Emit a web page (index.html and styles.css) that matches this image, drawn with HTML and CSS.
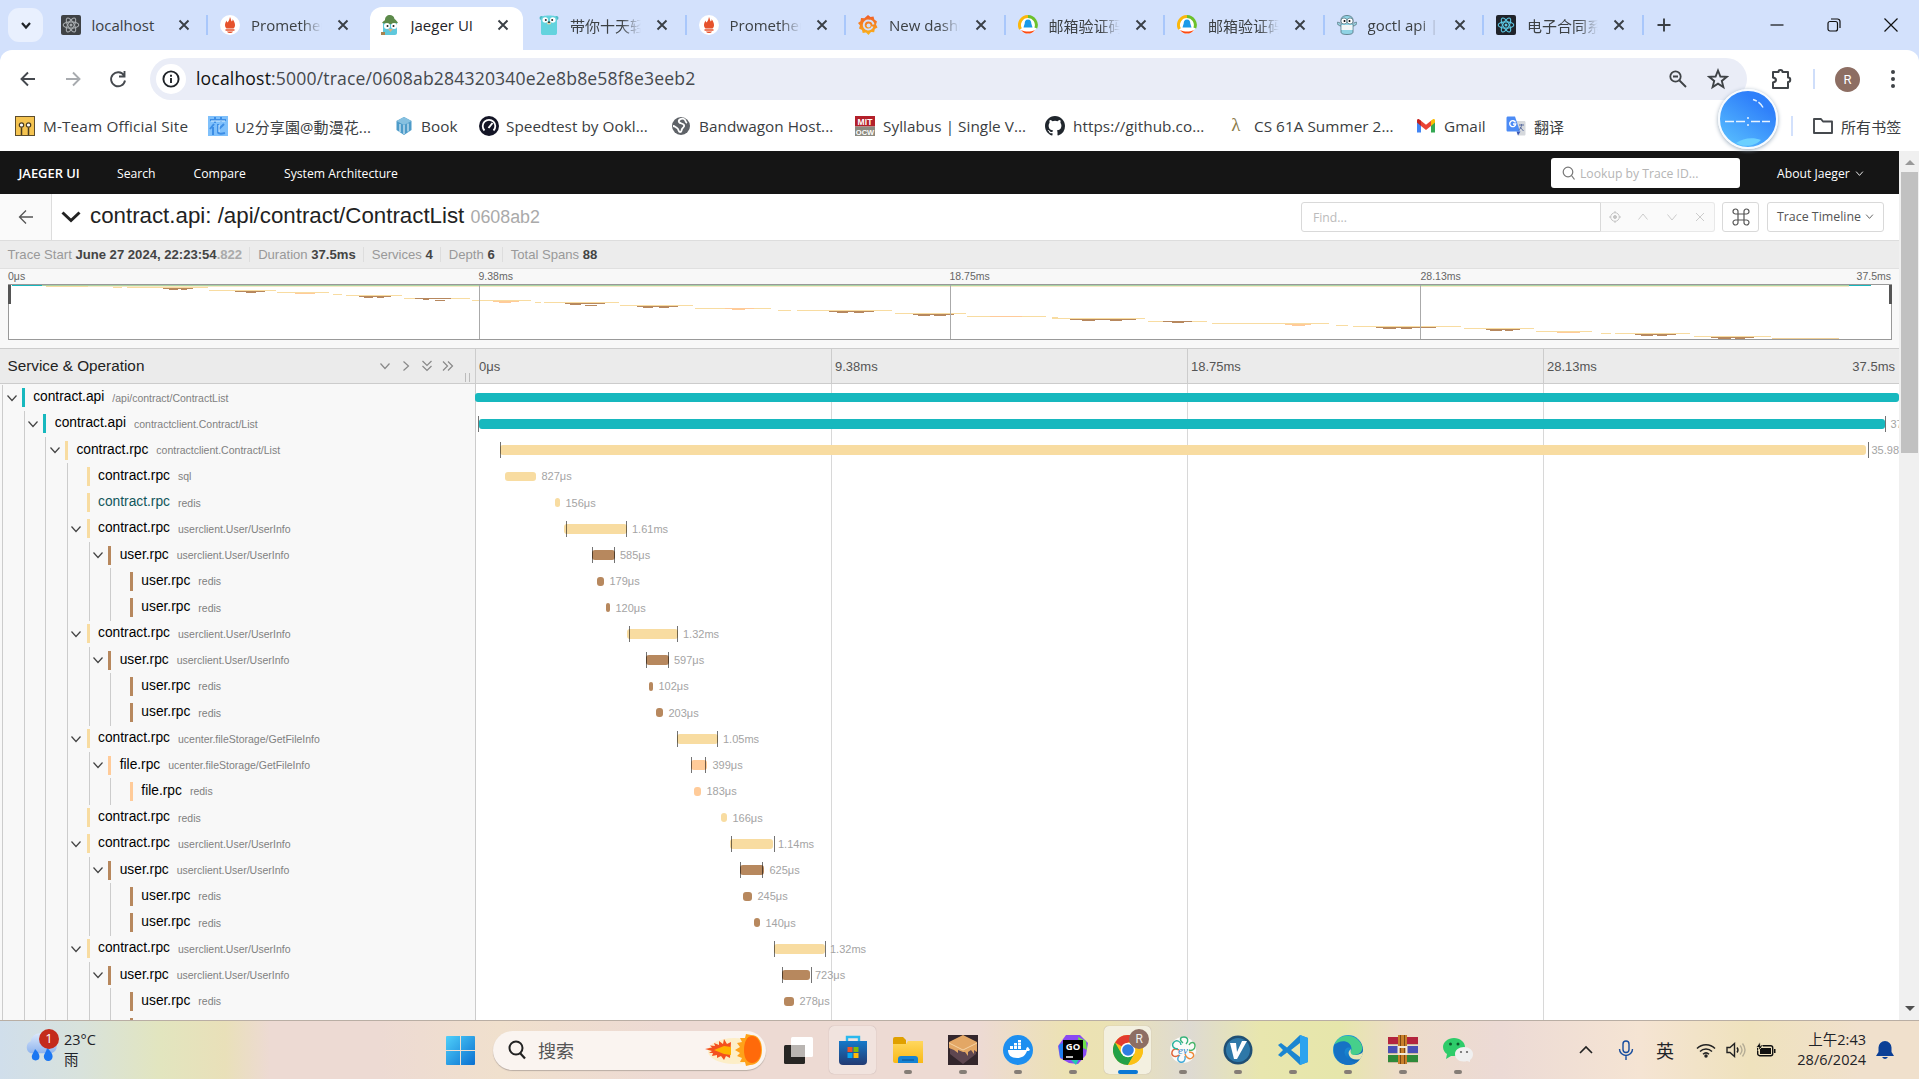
FILE: index.html
```html
<!DOCTYPE html>
<html lang="zh-CN">
<head>
<meta charset="utf-8">
<title>Jaeger UI</title>
<link rel="stylesheet" href="styles.css">
</head>
<body>
<svg class="defs" width="0" height="0">
  <defs>
    <linearGradient id="gWin" x1="0" y1="0" x2="1" y2="1"><stop offset="0" stop-color="#4fd0fa"/><stop offset="1" stop-color="#0a6fd0"/></linearGradient>
    <linearGradient id="gRain" x1="0" y1="0" x2="0" y2="1"><stop offset="0" stop-color="#dbe8fb"/><stop offset="1" stop-color="#8fb4ee"/></linearGradient>
    <linearGradient id="gEdge" x1="0" y1="0" x2="1" y2="1"><stop offset="0" stop-color="#2ab8e8"/><stop offset=".6" stop-color="#1479c9"/><stop offset="1" stop-color="#0c59a4"/></linearGradient>
    <linearGradient id="gStore" x1="0" y1="0" x2="0" y2="1"><stop offset="0" stop-color="#1579c9"/><stop offset="1" stop-color="#223a73"/></linearGradient>
    <linearGradient id="gFile" x1="0" y1="0" x2="0" y2="1"><stop offset="0" stop-color="#ffd75e"/><stop offset="1" stop-color="#f9b916"/></linearGradient>
    <linearGradient id="gGraf" x1="0" y1="0" x2="0" y2="1"><stop offset="0" stop-color="#f05a28"/><stop offset="1" stop-color="#fbb61a"/></linearGradient>
    <symbol id="x" viewBox="0 0 12 12"><path d="M1.500 1.500l9 9M10.500 1.500l-9 9" fill="none" stroke="#3a3f45" stroke-width="1.900"/></symbol>
    <symbol id="down" viewBox="0 0 12 12"><path d="M1.500 3.500L6 8.500l4.500-5" fill="none" stroke="currentColor" stroke-width="1.200"/></symbol>
    <symbol id="prom" viewBox="0 0 20 20"><circle cx="10" cy="10" r="10" fill="#fff"/><path d="M10 2c1 2 .7 3 1.800 4.500C13 5.500 12.600 4.500 12.500 4c1.500 2 2.500 4 2.500 6 0 1.500-.5 2.500-1.500 3.500h-7C5.500 12.500 5 11.500 5 10c0-2 1-3 1.500-4.500.3 1 .5 1.500 1 2C9 6 9.500 4 10 2zM5.500 14.300h9v1.500h-9zM7 16.500h6c-1 2-5 2-6 0z" fill="#e6522c"/></symbol>
    <symbol id="foxmail" viewBox="0 0 20 20"><circle cx="10" cy="10" r="9" fill="#fff"/><path d="M2.500 14A8.500 8.500 0 0 1 10 1.500" fill="none" stroke="#fbb70c" stroke-width="3"/><path d="M10 1.500A8.500 8.500 0 0 1 17.800 13" fill="none" stroke="#6cc12c" stroke-width="3"/><path d="M3 15a8.600 8.600 0 0 0 14 0c-5 2-9 2-14 0z" fill="#fb4a12"/><path d="M10 4.500c2.500 0 3.300 2 3.300 4l1.200 4H5.500l1.200-4c0-2 .8-4 3.300-4z" fill="#1c9be8"/></symbol>
    <symbol id="react" viewBox="0 0 20 20"><g fill="none" stroke="currentColor" stroke-width="1.100"><ellipse cx="10" cy="10" rx="7.800" ry="3.100"/><ellipse cx="10" cy="10" rx="7.800" ry="3.100" transform="rotate(60 10 10)"/><ellipse cx="10" cy="10" rx="7.800" ry="3.100" transform="rotate(120 10 10)"/></g><circle cx="10" cy="10" r="1.500" fill="currentColor"/></symbol>
    <symbol id="gopher" viewBox="0 0 20 20"><circle cx="2.500" cy="3" r="2" fill="#4bb9c4"/><circle cx="17.500" cy="3" r="2" fill="#4bb9c4"/><path d="M2 5C2 1 5 .5 10 .5S18 1 18 5v13c0 1.500-1 2-2 2H4c-1 0-2-.5-2-2z" fill="#63d3de"/><circle cx="6.200" cy="5" r="2.800" fill="#fff"/><circle cx="13.800" cy="5" r="2.800" fill="#fff"/><circle cx="6.800" cy="5" r="1" fill="#222"/><circle cx="13.200" cy="5" r="1" fill="#222"/><ellipse cx="10" cy="8.200" rx="2" ry="1.300" fill="#e8cfa0"/><circle cx="10" cy="7.200" r=".9" fill="#222"/></symbol>
  </defs>
</svg>

<header class="browser">
  <div class="tabstrip">
    <div class="tabsearch"><svg width="12" height="12"><path d="M2 4l4 4.500L10 4" fill="none" stroke="#1f2328" stroke-width="2.200"/></svg></div>
    <div class="tab"><svg class="fav dark" viewBox="0 0 20 20"><use href="#react"/></svg><span>localhost</span><svg class="cls"><use href="#x"/></svg></div>
    <div class="tab"><svg class="fav"><use href="#prom"/></svg><span>Prometheus</span><svg class="cls"><use href="#x"/></svg></div>
    <div class="tab active"><svg class="fav" viewBox="0 0 20 20"><path d="M3 9c0-3 3-4 7-4s7 1 7 4v9c0 1-1 2-2 2H5c-1 0-2-1-2-2z" fill="#5fc8dc"/><path d="M2 8c1-1.500 2-2 3-3 0-3 2-5 5-5 2 0 4 1 4.500 4C16 5 17 6 18 8c-5 1.500-11 1.500-16 0z" fill="#5c8a4a"/><circle cx="7" cy="11" r="3" fill="#fff"/><circle cx="14" cy="11" r="3" fill="#fff"/><circle cx="7.500" cy="11" r="1" fill="#222"/><circle cx="13.500" cy="11" r="1" fill="#222"/><path d="M8 14h5l-2.500 3z" fill="#d6b184"/><path d="M1 17h4v3H1z" fill="#a8834f"/></svg><span>Jaeger UI</span><svg class="cls"><use href="#x"/></svg></div>
    <div class="tab"><svg class="fav"><use href="#gopher"/></svg><span>带你十天轻松</span><svg class="cls"><use href="#x"/></svg></div>
    <div class="tab"><svg class="fav"><use href="#prom"/></svg><span>Prometheus</span><svg class="cls"><use href="#x"/></svg></div>
    <div class="tab"><svg class="fav" viewBox="0 0 20 20"><path d="M10 0l2.500 2 3-.5.8 3L19 6.500 18 9.500l1.500 3-2.700 1.500-.6 3.200-3.200-.2L10.500 20 8 17.500l-3.300.5-.7-3L1 13.500l1-3-2-2.500 2.500-1.700L3 3l3.300.3z" fill="url(#gGraf)"/><path d="M14.500 11.500a4.500 4.500 0 1 1-4-6c2.500 0 4.500 1.500 5 4" fill="none" stroke="#d3e1fc" stroke-width="2"/><circle cx="10.600" cy="10.500" r="2" fill="#d3e1fc"/></svg><span>New dashboard</span><svg class="cls"><use href="#x"/></svg></div>
    <div class="tab"><svg class="fav"><use href="#foxmail"/></svg><span>邮箱验证码是</span><svg class="cls"><use href="#x"/></svg></div>
    <div class="tab"><svg class="fav"><use href="#foxmail"/></svg><span>邮箱验证码是</span><svg class="cls"><use href="#x"/></svg></div>
    <div class="tab"><svg class="fav" viewBox="0 0 20 20"><path d="M3 8c-2-1-3-1-3 0s2 3 4 3M17 8c2-1 3-1 3 0s-2 3-4 3" fill="#9bd5e3" stroke="#53707a" stroke-width=".8"/><path d="M4 5c0-3 3-4.500 6-4.500S16 2 16 5v12c0 2-3 2.500-6 2.500S4 19 4 17z" fill="#8fd3e4" stroke="#53707a" stroke-width=".8"/><path d="M4.500 10h11v5h-11z" fill="#f3f6f6"/><circle cx="7" cy="6" r="3" fill="#fff" stroke="#53707a" stroke-width=".7"/><circle cx="13" cy="6" r="3" fill="#fff" stroke="#53707a" stroke-width=".7"/><circle cx="7.500" cy="6" r="1"/><circle cx="12.500" cy="6" r="1"/></svg><span>goctl api | go</span><svg class="cls"><use href="#x"/></svg></div>
    <div class="tab"><svg class="fav dark cyan" viewBox="0 0 20 20"><use href="#react"/></svg><span>电子合同系统</span><svg class="cls"><use href="#x"/></svg></div>
    <svg class="plus" width="14" height="14"><path d="M7 .5v13M.5 7h13" stroke="#3a3f45" stroke-width="1.900"/></svg>
    <div class="winctl">
      <svg width="14" height="14"><path d="M.5 7h13" stroke="#111" stroke-width="1.200"/></svg>
      <svg width="14" height="14" fill="none" stroke="#111" stroke-width="1.200"><rect x="1" y="3.500" width="9.500" height="9.500" rx="2"/><path d="M4 1h6.500a2.500 2.500 0 0 1 2.500 2.500V10"/></svg>
      <svg width="14" height="14"><path d="M.5.5l13 13M13.500.5l-13 13" stroke="#111" stroke-width="1.200"/></svg>
    </div>
  </div>
  <div class="toolbar">
    <svg class="tb" width="20" height="20"><path d="M17 10H4M10 3.500L3.500 10l6.500 6.500" fill="none" stroke="#45494e" stroke-width="1.900"/></svg>
    <svg class="tb" width="20" height="20"><path d="M3 10h13M10 3.500l6.500 6.500-6.500 6.500" fill="none" stroke="#a8abaf" stroke-width="1.900"/></svg>
    <svg class="tb" width="20" height="20"><path d="M16 6.500A7 7 0 1 0 17 11.500M16.500 2v5.500H11" fill="none" stroke="#45494e" stroke-width="1.900"/></svg>
    <div class="omnibox">
      <i class="info"><svg width="20" height="20"><circle cx="10" cy="10" r="7.600" fill="none" stroke="#1f2328" stroke-width="1.900"/><path d="M10 9v5M10 5.700v2" stroke="#1f2328" stroke-width="1.900"/></svg></i>
      <span class="url"><b>localhost</b>:5000/trace/0608ab284320340e2e8b8e58f8e3eeb2</span>
      <svg class="mag" width="20" height="20"><circle cx="7.500" cy="7.500" r="5.200" fill="none" stroke="#3f4347" stroke-width="1.800"/><path d="M11.500 11.500l6.500 6.500M5 7.500h5" stroke="#3f4347" stroke-width="1.900"/></svg>
      <svg class="star" width="22" height="22"><path d="M11 2.500l2.400 6 6.200.4-4.800 4 1.600 6.200L11 15.700l-5.400 3.400 1.600-6.200-4.800-4 6.200-.4z" fill="none" stroke="#3f4347" stroke-width="1.900"/></svg>
    </div>
    <svg class="ext" width="22" height="24"><path d="M2 5h5.500a2 2 0 0 1 4 0H17v5.500a2 2 0 0 1 0 4.500v6H2v-5.500c4-1 4-4 0-5z" fill="none" stroke="#3f4347" stroke-width="2" stroke-linejoin="round"/></svg>
    <i class="vsep"></i>
    <div class="avatar">R</div>
    <svg class="dots" width="6" height="20" fill="#3f4347"><circle cx="3" cy="3" r="2"/><circle cx="3" cy="10" r="2"/><circle cx="3" cy="17" r="2"/></svg>
  </div>
  <div class="bookmarks">
    <div class="bm"><svg viewBox="0 0 20 20"><rect x=".5" y=".5" width="19" height="19" fill="#f5c451" stroke="#5d4d2c"/><g fill="#fff" stroke="#4a3c22" stroke-width="1.200"><circle cx="6.500" cy="9" r="2.200"/><circle cx="13.500" cy="9" r="2.200"/></g><path d="M6.500 11.500V19M13.500 11.500V19" stroke="#4a3c22" stroke-width="1.500"/></svg><span>M-Team Official Site</span></div>
    <div class="bm cjk"><svg viewBox="0 0 20 20"><rect width="20" height="20" fill="#7fc0fb"/><path d="M2 4h16M7 1v6M13 1v5M6 8l-4 5M5 11v8M10 8v8c0 2 3 2 7 1M16 8l-5 5" fill="none" stroke="#3d8ee6" stroke-width="2"/><path d="M3 5h14M11 9v7" stroke="#d9f0ff"/></svg><span>U2分享園@動漫花...</span></div>
    <div class="bm"><svg viewBox="0 0 20 20"><path d="M10 1l7.500 4v9L10 19l-7.500-5V5z" fill="#4d9bc9"/><path d="M10 1l7.500 4L10 9 2.500 5z" fill="#86c0e0"/><path d="M6 8v8M10 9v9M14 7.500v8" stroke="#d5eaf5" stroke-width="1.200"/></svg><span>Book</span></div>
    <div class="bm"><svg viewBox="0 0 20 20"><circle cx="10" cy="10" r="10" fill="#141526"/><path d="M5.500 14.500a6.300 6.300 0 1 1 9 0" fill="none" stroke="#fff" stroke-width="1.800"/><path d="M9.500 12l4-5" stroke="#fff" stroke-width="2"/></svg><span>Speedtest by Ookl...</span></div>
    <div class="bm"><svg viewBox="0 0 20 20"><circle cx="10" cy="10" r="9" fill="#5f6368"/><path d="M13 3c-3-1-6 1-5 3s4 1 5 3-1 2-2 4 0 3-2 3-1-3-3-4-2-2-4-2M13 3c2 1 1 3 3 4" fill="none" stroke="#fff" stroke-width="1.800"/></svg><span>Bandwagon Host...</span></div>
    <div class="bm"><svg viewBox="0 0 20 20"><rect width="20" height="10.500" fill="#b3202a"/><rect y="10.500" width="20" height="9.500" fill="#8c8a80"/><text x="10" y="8.800" class="mit">MIT</text><text x="10" y="18.800" class="mit ocw">OCW</text></svg><span>Syllabus | Single V...</span></div>
    <div class="bm"><svg viewBox="0 0 16 16"><path fill="#20262d" d="M8 0C3.580 0 0 3.580 0 8c0 3.540 2.290 6.530 5.470 7.590.4.070.55-.17.55-.38 0-.19-.010-.82-.010-1.490-2.010.37-2.530-.49-2.690-.94-.090-.23-.48-.94-.82-1.130-.28-.15-.68-.52-.010-.53.63-.010 1.080.58 1.230.82.72 1.210 1.870.87 2.330.66.070-.52.28-.87.51-1.070-1.780-.2-3.640-.89-3.640-3.950 0-.87.31-1.590.82-2.150-.080-.2-.36-1.020.080-2.120 0 0 .67-.21 2.200.82a7.600 7.600 0 0 1 4 0c1.530-1.040 2.200-.82 2.200-.82.44 1.100.16 1.920.080 2.120.51.56.82 1.270.82 2.150 0 3.070-1.870 3.750-3.650 3.950.29.25.54.73.54 1.480 0 1.070-.010 1.930-.010 2.200 0 .21.15.46.55.38A8 8 0 0 0 16 8c0-4.420-3.580-8-8-8z"/></svg><span>https://github.co...</span></div>
    <div class="bm"><i class="lambda">λ</i><span>CS 61A Summer 2...</span></div>
    <div class="bm"><svg viewBox="0 0 20 20"><path d="M1 4.500V16.500h4V8z" fill="#4285f4"/><path d="M19 4.500V16.500h-4V8z" fill="#34a853"/><path d="M15 4.500l2-1.300c1-.5 2 0 2 1.300v2L15 10z" fill="#fbbc04"/><path d="M5 10V4.800l5 3.900 5-3.900V10l-5 4z" fill="#ea4335"/><path d="M1 4.500c0-1.300 1-1.800 2-1.300l2 1.300V10L1 6.500z" fill="#c5221f"/></svg><span>Gmail</span></div>
    <div class="bm cjk"><svg viewBox="0 0 20 20"><path d="M8 5h10c1 0 1.500.5 1.500 1.500V18c0 1-.5 1.500-1.500 1.500h-6z" fill="#d5d8dc"/><path d="M12 19.500l-1.500-4h4z" fill="#3956b5"/><path d="M2 .5h7L14 15.500H2C1 15.500.5 15 .5 14V2C.5 1 1 .5 2 .5z" fill="#4c8bf5"/><path d="M9.500 6.500A3 3 0 1 0 9.700 8H7" fill="none" stroke="#fff" stroke-width="1.400"/><path d="M13 9h5M15.500 8v1c0 2-1 4-3 5M14 11l3.500 4" stroke="#5d6fa0" fill="none"/></svg><span>翻译</span></div>
    <div class="bm cjk all"><svg viewBox="0 0 20 20"><path d="M1 3h7l2 2.500h9V17H1z" fill="none" stroke="#45494e" stroke-width="1.900" stroke-linejoin="round"/></svg><span>所有书签</span></div>
  </div>
  <div class="orb"><svg width="56" height="56"><path d="M33 8.500c5 1.500 8 4.500 10 8" fill="none" stroke="#dff0ff" stroke-width="1.500" stroke-dasharray="4 2 12"/><path d="M16 52c7-5 17-6 25-3-6 6-17 8-25 3z" fill="#6bd0ff"/><path d="M5 30.500h9M16 30.500h9M31 30.500h9M42 30.500h8" stroke="#e8f4ff" stroke-width="1.300"/><circle cx="28" cy="27" r="1" fill="#e8f4ff"/><circle cx="28" cy="34" r="1" fill="#e8f4ff"/></svg></div>
</header>

<main class="viewport">
  <div class="page">
    <nav class="topnav">
      <b>JAEGER UI</b><a>Search</a><a>Compare</a><a>System Architecture</a>
      <div class="lookup"><svg width="13" height="14"><circle cx="6" cy="6" r="4.800" fill="none" stroke="#777" stroke-width="1.200"/><path d="M9.500 9.500l3 4" stroke="#777" stroke-width="1.200"/></svg>Lookup by Trace ID...</div>
      <div class="about">About Jaeger<svg width="9" height="9"><use href="#down"/></svg></div>
    </nav>
    <section class="titlebar">
      <div class="back"><svg width="16" height="16"><path d="M15 8H2M8 1.500L1.500 8 8 14.500" fill="none" stroke="#555" stroke-width="1.300"/></svg></div>
      <svg class="big" width="20" height="14"><path d="M1.500 2.500L10 10.500l8.500-8" fill="none" stroke="#222" stroke-width="3"/></svg>
      <h1>contract.api: /api/contract/ContractList <small>0608ab2</small></h1>
      <div class="find">
        <div class="field">Find...</div>
        <div class="findbtns">
          <svg width="12" height="12" fill="none" stroke="#c4c4c4"><circle cx="6" cy="6" r="4.300"/><circle cx="6" cy="6" r="1.500" fill="#c4c4c4"/><path d="M6 0v2M6 10v2M0 6h2M10 6h2"/></svg>
          <svg width="12" height="12"><path d="M1.500 8.500L6 3l4.500 5.500" fill="none" stroke="#ccc"/></svg>
          <svg width="12" height="12"><path d="M1.500 3.500L6 9l4.500-5.500" fill="none" stroke="#ccc"/></svg>
          <svg width="12" height="12"><path d="M2 2l8 8M10 2l-8 8" fill="none" stroke="#ccc"/></svg>
        </div>
      </div>
      <div class="btn cmd"><svg width="18" height="18" fill="none" stroke="#555" stroke-width="1.200"><path d="M6 6h6v6H6zM6 6H3.800A2.500 2.500 0 1 1 6 3.800zM12 6V3.800A2.500 2.500 0 1 1 14.200 6zM12 12h2.200A2.500 2.500 0 1 1 12 14.200zM6 12v2.200A2.500 2.500 0 1 1 3.800 12z"/></svg></div>
      <div class="btn mode">Trace Timeline<svg width="9" height="9"><use href="#down"/></svg></div>
    </section>
    <section class="meta">
      <span>Trace Start <b>June 27 2024, 22:23:54<em>.822</em></b></span><span>Duration <b>37.5ms</b></span><span>Services <b>4</b></span><span>Depth <b>6</b></span><span>Total Spans <b>88</b></span>
    </section>
    <section class="overview">
      <div class="ticks"><span>0μs</span><span>9.38ms</span><span>18.75ms</span><span>28.13ms</span><span class="end">37.5ms</span></div>
      <div class="graph" id="graph"><i class="q q1"></i><i class="q q2"></i><i class="q q3"></i><i class="grip left"></i><i class="grip right"></i></div>
    </section>
    <section class="thead">
      <div class="so"><h2>Service &amp; Operation</h2>
        <svg width="12" height="12"><use href="#down"/></svg>
        <svg width="12" height="12"><path d="M3.500 1.500L8.500 6l-5 4.500" fill="none" stroke="currentColor" stroke-width="1.200"/></svg>
        <svg width="12" height="12"><path d="M1.500 1L6 5.500 10.500 1M1.500 6L6 10.500 10.500 6" fill="none" stroke="currentColor" stroke-width="1.200"/></svg>
        <svg width="12" height="12"><path d="M1 1.500L5.500 6 1 10.500M6 1.500L10.500 6 6 10.500" fill="none" stroke="currentColor" stroke-width="1.200"/></svg>
        <i class="resizer"></i>
      </div>
      <div class="cols"><span>0μs</span><span>9.38ms</span><span>18.75ms</span><span>28.13ms<b>37.5ms</b></span></div>
    </section>
    <section class="rows" id="rows"></section>
  </div>
  <aside class="scroll"><i class="up"></i><i class="thumb"></i><i class="dn"></i></aside>
</main>

<footer class="taskbar">
  <div class="weather">
    <svg width="34" height="38" viewBox="0 3 31 34"><path d="M7 23a6 6 0 0 1 0-11 9 9 0 0 1 17-2c7-1 10 10 2 13z" fill="url(#gRain)"/><path d="M11 19c3 3 4 5 4 7a3.500 3.500 0 0 1-7 0c0-2 2-4 3-7zM22 18c4 4 5 6 5 8a4 4 0 0 1-8 0c0-2 2-4 3-8z" fill="#1b77f2"/></svg>
    <i class="count">1</i>
    <p>23°C<br>雨</p>
  </div>
  <svg class="start" width="29" height="29" fill="url(#gWin)"><path d="M0 1q0-1 1-1h13v14H0zM15 0h13q1 0 1 1v13H15zM0 15h14v14H1q-1 0-1-1zM15 15h14v13q0 1-1 1H15z"/></svg>
  <div class="search">
    <svg width="20" height="20"><circle cx="9" cy="8" r="6.500" fill="none" stroke="#222" stroke-width="2"/><path d="M13 13l5 5.500" stroke="#222" stroke-width="2.200"/></svg>
    <span>搜索</span>
    <svg class="fire" width="60" height="34"><ellipse cx="30" cy="18" rx="26" ry="13" fill="#ffe9ac" opacity=".6"/><path d="M1 16l7-1.500-2-2 5 .5-1-3 5 2 0-4 4 3 1-5 3 5 4-2-1 16-4-2-2 4-3-4-4 2 0-3-5 1 1-3-4 0 3-2z" fill="#f4511e"/><path d="M10 17l10-4 7 1v8l-7-1z" fill="#ffb300"/><path d="M58 17c0 9-5 15-12 15l-4 1-1-4-5 0 2-4-5-2 3-3-5-3 5-3-3-4 5-1-2-4 5 0 1-4 5 1c7 0 11 6 11 15z" fill="#ffa21a"/><path d="M57 17c0 8-4 13-9 13s-8-5-8-13S43 3 48 3s9 6 9 14z" fill="#ff6a0a"/></svg>
  </div>
  <div class="apps">
    <div class="app view"><svg viewBox="0 0 30 30"><rect x="1" y="10" width="21" height="19" rx="1.500" fill="#272624"/><rect x="8" y="2" width="22" height="20" rx="1.500" fill="#fff"/><path d="M8 10h14v12H8z" fill="#b9b5b2"/></svg></div>
    <div class="app hover"><svg viewBox="0 0 30 30"><path d="M9 7V2h12v5" fill="none" stroke="#2ab8ee" stroke-width="2.400"/><path d="M1 6h28v20q0 4-4 4H5q-4 0-4-4z" fill="url(#gStore)"/><path d="M9.500 12h5v5h-5z" fill="#f35325"/><path d="M15.500 12h5v5h-5z" fill="#81bc06"/><path d="M9.500 18h5v5h-5z" fill="#05a6f0"/><path d="M15.500 18h5v5h-5z" fill="#ffba08"/></svg></div>
    <div class="app run"><svg viewBox="0 0 30 30"><path d="M0 4q0-2 2-2h8l3 3v5H0z" fill="#e0a000"/><path d="M0 9h13l2-3h15v22H2q-2 0-2-2z" fill="url(#gFile)"/><path d="M5 28v-4q0-3 3-3h14q3 0 3 3v4z" fill="#1583d4"/><path d="M9 25h12" stroke="#0b4f8c"/></svg></div>
    <div class="app run"><svg viewBox="0 0 30 30"><path d="M0 0h30v30H0z" fill="#33262c"/><path d="M2 8L15 15l13-7v11L15 29 2 19z" fill="#5e4650"/><path d="M1 7L15 0l14 7v10l-3-2v4l-3-4-3 2v4l-3-4-2 0-5-2v3l-4-3-5-2z" fill="#e3a765"/><path d="M1 8l14 7 14-7" fill="none" stroke="#f5d3a5"/></svg></div>
    <div class="app run"><svg viewBox="0 0 30 30"><circle cx="15" cy="15" r="15" fill="#1d8ff0"/><path d="M5 15h18c0-2 1-3 2-3l2 3c-1 1-2 1-3 1-2 5-5 7-10 7-6 0-9-3-9-8zM7 11h3v3H7zM11 11h3v3h-3zM15 11h3v3h-3zM11 8h3v2.500h-3zM15 8h3v2.500h-3zM15 5h3v2.500h-3z" fill="#fff"/></svg></div>
    <div class="app run"><svg viewBox="0 0 30 30"><path d="M8 0h14l8 8-2 12-8 9-9-1-9-5L0 11z" fill="#8a4af3"/><path d="M20 2l8 4 1 9-8-4z" fill="#6ee04a"/><path d="M1 10l6-3 1 18-6-3z" fill="#1e7ff0"/><path d="M10 22h12l-4 8z" fill="#24c8b0"/><path d="M5 5h20v20H5z" fill="#000"/><path d="M8 22h7" stroke="#fff" stroke-width="1.500"/><text x="15" y="15" class="go">GO</text></svg></div>
    <div class="app run chrome"><svg viewBox="0 0 30 30"><circle cx="15" cy="15" r="15" fill="#fbc116"/><path d="M15 15L2 7.500A15 15 0 0 1 28 7.500H15z" fill="#e33b2e"/><path d="M15 15L8.500 18.800 2 7.500A15 15 0 0 0 15 30l6.500-11.200z" fill="#23a047"/><path d="M15 7.500h13A15 15 0 0 1 15 30l6.500-11.200z" fill="#fbc116"/><circle cx="15" cy="15" r="7.300" fill="#fff"/><circle cx="15" cy="15" r="5.800" fill="#2f7de1"/></svg><i class="rb">R</i></div>
    <div class="app run"><svg viewBox="0 0 30 30"><circle cx="15" cy="15" r="13" fill="#fff" opacity=".85"/><g fill="none" stroke-width="1.400"><path d="M15 8c-4-3-3-6 1-6s5 4 2 7" stroke="#36b27b"/><path d="M21 10c2-4 6-3 6 1s-4 5-6 4" stroke="#48b56b"/><path d="M21 17c5 0 6 4 3 6s-6-1-7-4" stroke="#ed8a3a"/><path d="M17 21c1 5-2 7-5 6s-3-5 0-7" stroke="#3fa9d8"/><path d="M11 20c-4 3-8 1-7-3s5-3 7-2" stroke="#e0663b"/><path d="M10 14C5 14 3 10 6 7s7 0 7 3" stroke="#2bb3a0"/></g><text x="15" y="19" class="ev">ev</text></svg></div>
    <div class="app run"><svg viewBox="0 0 30 30"><circle cx="15" cy="15" r="14.500" fill="#1f4f74"/><circle cx="15" cy="15" r="12" fill="#2e78a8"/><path d="M7 8h6l1 9 5-11h5L14 24h-3z" fill="#fff"/></svg></div>
    <div class="app run"><svg viewBox="0 0 30 30"><path d="M22 0l8 3v24l-8 3L9 17.500 3 22l-3-2 5-5-5-5 3-2 6 4.500zM22 8l-9 7 9 7z" fill="#1b86d1" fill-rule="evenodd"/><path d="M22 0l8 3v24l-8 3z" fill="#2ba3ee"/></svg></div>
    <div class="app run"><svg viewBox="0 0 30 30"><circle cx="15" cy="15" r="15" fill="url(#gEdge)"/><path d="M2 9C6-1 20-2 27 7c5 7 1 13-6 13-4 0-5-2-3-4 2-5-2-8-6-8-4 0-7 1-10 1z" fill="#46cf8b"/><path d="M1 10C7 4 18 5 18 13c-7-3-10 8 0 13 4 1 7 0 9-2-3 5-8 6-12 6C5 30-1 20 1 10z" fill="#1672c4"/><path d="M18 14c-1 4 0 6 4 6s8-2 8-4c0 3-1 6-3 8-9 3-15-6-9-10z" fill="#e8e6b4"/></svg></div>
    <div class="app run"><svg viewBox="0 0 30 30"><path d="M0 2h30v8H0z" fill="#b3243e"/><path d="M0 11h30v8H0z" fill="#4a4fb5"/><path d="M0 20h30v8H0z" fill="#2f8a3a"/><path d="M0 9.500h30M0 18.500h30M0 27.500h30" stroke="#c9b9a0"/><path d="M10 0h9v29h-9z" fill="#c9802b"/><path d="M12 0h1v29h-1zM16 0h1v29h-1z" fill="#7a4815"/><path d="M10.500 12h8v7h-8z" fill="none" stroke="#f1ead9" stroke-width="2"/></svg></div>
    <div class="app run"><svg viewBox="0 0 30 30"><path d="M11 3c6 0 11 4 11 9s-5 9-11 9l-3 0-5 3 1-5c-2-1-4-4-4-7 0-5 5-9 11-9z" fill="#2ecc6a"/><circle cx="7.500" cy="9" r="1.500" fill="#0b5a2c"/><circle cx="15" cy="9" r="1.500" fill="#0b5a2c"/><path d="M21 12c5 0 9 3 9 7 0 3-1 4-3 6l0 2-3-1c-7 2-12-2-12-7 0-4 4-7 9-7z" fill="#f0f0f0"/><circle cx="18" cy="17" r="1.100" fill="#666"/><circle cx="24" cy="17" r="1.100" fill="#666"/></svg></div>
  </div>
  <div class="tray">
    <svg width="14" height="10"><path d="M1 8l6-6 6 6" fill="none" stroke="#222" stroke-width="1.600"/></svg>
    <svg class="mic" width="16" height="20" fill="none" stroke="#164c9e" stroke-width="1.400"><rect x="5" y="1" width="6" height="11.500" rx="3"/><path d="M1.500 9a6.500 6.500 0 0 0 13 0M8 15.500V20"/></svg>
    <span class="ime">英</span>
    <svg class="wifi" width="20" height="16" fill="none" stroke="#222" stroke-width="1.500"><path d="M1 6.500a12.500 12.500 0 0 1 18 0M4 9.500a8.500 8.500 0 0 1 12 0M7 12.200a4.500 4.500 0 0 1 6 0"/><circle cx="10" cy="14" r="1" fill="#222"/></svg>
    <svg class="vol" width="20" height="16" fill="none" stroke="#222" stroke-width="1.400"><path d="M1 5.500h3L8.500 1.500v13L4 10.500H1z"/><path d="M11 5.500q2 2.500 0 5"/><path d="M14 3.500q4 4.500 0 9M16.500 1.500q5 6.500 0 13" stroke="#b5ad96"/></svg>
    <svg class="bat" width="20" height="16"><rect x="1.700" y="3.700" width="15" height="10" rx="2" fill="none" stroke="#111" stroke-width="1.400"/><path d="M4 6h11v6H4z" fill="#111"/><path d="M18 7h1.500v4H18z" fill="#111"/><path d="M4 0L0 5.500h3L2 9l5-5H4.500z" fill="#111" stroke="#efe3be" stroke-width=".8"/></svg>
    <p class="clock">上午2:43<br>28/6/2024</p>
    <svg class="bell" width="18" height="20"><path d="M9 1a6.500 6.500 0 0 1 6.500 6.500V12L18 16H0l2.500-4V7.500A6.500 6.500 0 0 1 9 1zM6 17h6q-3 4-6 0z" fill="#0b3f96"/></svg>
  </div>
</footer>
<script src="script.js"></script>
</body>
</html>
```
FILE: styles.css
```css
* { box-sizing: border-box; }
body { margin: 0; width: 1919px; height: 1079px; overflow: hidden; display: flex; flex-direction: column; background: #fff; font-family: "Open Sans", "Noto Sans CJK SC", sans-serif; color: #1f2328; }
h1, h2, p { margin: 0; font-weight: 400; }
i, em { font-style: normal; }
svg { display: block; flex: none; }
.defs { position: absolute; }

/* browser frame */
.browser { position: relative; height: 151px; flex: none; background: #d3e1fc; }
.tabstrip { height: 50px; display: flex; align-items: center; padding-left: 8px; }
.tabsearch { width: 35px; height: 34px; border-radius: 11px; background: #e9f0fe; display: grid; place-items: center; margin-right: 4.500px; }
.tab { position: relative; width: 159.500px; height: 50px; display: flex; align-items: center; padding-left: 13px; font-size: 15px; color: #3c4043; }
.tab::after { content: ""; position: absolute; right: -1px; top: 15px; width: 2px; height: 20px; background: #a9c7fb; }
.tab:nth-child(3)::after, .tab.active::after { display: none; }
.tab span { width: 71px; margin: 0 15px 0 11px; overflow: hidden; white-space: nowrap; -webkit-mask-image: linear-gradient(90deg, #000 72%, transparent 100%); }
.tab:nth-child(2) span, .tab.active span { -webkit-mask-image: none; }
.tab.active { color: #1f2328; z-index: 1; }
.tab.active::before { content: ""; position: absolute; z-index: -1; left: 3px; top: 7px; width: 153px; height: 43px; border-radius: 12px 12px 0 0; background: #fff; }
.fav { width: 20px; height: 20px; }
.dark { background: #3f4245; color: #a9adb0; border-radius: 2px; }
.dark.cyan { background: #20232a; color: #5cc8e4; }
.cls { width: 12px; height: 12px; }
.plus { margin-left: 14px; }
.winctl { display: flex; gap: 43px; margin-left: auto; padding-right: 21px; }
.toolbar { height: 58px; background: #fff; border-radius: 12px 12px 0 0; display: flex; align-items: center; padding: 0 0 0 18px; }
.tb { margin-right: 25px; }
.omnibox { width: 1597px; height: 42px; margin-left: -3px; border-radius: 21px; background: #eaedf7; display: flex; align-items: center; padding-left: 6px; }
.info { width: 30px; height: 30px; border-radius: 50%; background: #fff; display: grid; place-items: center; }
.url { margin: -2px 0 0 10px; font-size: 17.600px; color: #45494e; letter-spacing: .15px; }
.url b { font-weight: 400; color: #111; }
.mag { margin-left: auto; }
.star { margin: 0 18px 0 19px; }
.ext { margin-left: 24px; }
.vsep { width: 2px; height: 20px; background: #cfdefa; margin-left: 20px; }
.avatar { width: 25px; height: 25px; margin-left: 20px; border-radius: 50%; background: #8d6e63; color: #fff; display: grid; place-items: center; font: 13px Roboto, sans-serif; }
.dots { margin-left: 30px; }
.bookmarks { height: 43px; background: #fff; padding: 0 0 7px 15px; display: grid; grid-template-columns: 193px 186px 85px 192px 184px 190px 181px 190px 90px 285px auto; align-items: center; }
.bm { display: flex; align-items: center; gap: 8px; font-size: 15.300px; white-space: nowrap; color: #3a3d41; letter-spacing: .04px; }
.bm.cjk { font-size: 15px; letter-spacing: .1px; }
.bm:first-child { letter-spacing: .15px; }
.bm svg, .lambda { width: 20px; height: 20px; }
.bm.cjk:nth-child(2) { gap: 7px; }
.bm:nth-child(3) span, .bm:nth-child(4) span { margin-left: -1px; }
.lambda { font: 19px/18px "Liberation Serif", serif; text-align: center; color: #8a7a4a; }
.mit { font: 900 8.500px "Liberation Sans", sans-serif; text-anchor: middle; fill: #fff; }
.ocw { font-size: 7.500px; }
.bm.all { border-left: 2px solid #d3e1fc; height: 20px; padding-left: 20px; }
.orb { position: absolute; z-index: 3; left: 1718px; top: 89px; width: 60px; height: 60px; border: 2px solid #f7fbff; border-radius: 50%; background: linear-gradient(35deg, #5cc4ff, #2f80fa 75%); box-shadow: 0 1px 4px #9ab; overflow: hidden; }

/* page */
.viewport { height: 869px; flex: none; display: flex; font-family: "Liberation Sans", Arial, sans-serif; }
.page { width: 1899px; display: flex; flex-direction: column; overflow: hidden; }
.topnav { height: 43px; flex: none; background: #151515; color: #fff; display: flex; align-items: center; padding: 1px 0 0 18.500px; font: 12.200px "Open Sans", sans-serif; }
.topnav b { font-weight: 600; font-size: 12.900px; width: 98.500px; }
.topnav a { margin-right: 38px; }
.lookup { width: 189px; height: 30px; margin-left: auto; border-radius: 3px; background: #fff; color: #b5b5b5; display: flex; align-items: center; gap: 5px; padding-left: 11px; }
.about { width: 159px; padding-left: 37px; display: flex; align-items: center; gap: 5px; }
.titlebar { height: 47px; flex: none; border-bottom: 1px solid #ddd; display: flex; align-items: center; }
.back { width: 52px; height: 46px; border-right: 1px solid #ddd; background: #fafafa; display: grid; place-items: center; }
.big { margin: 0 0 0 9px; }
h1 { margin: -3px 0 0 9px; font-size: 22.300px; color: #222; white-space: nowrap; }
h1 small { font-size: 17.850px; color: #aaa; }
.find { width: 414px; height: 30px; margin: -1px 7px 0 auto; display: flex; font: 12.200px "Open Sans", sans-serif; }
.field { width: 300px; border: 1px solid #d9d9d9; border-radius: 3px 0 0 3px; color: #bbb; padding: 6px 11px; }
.findbtns { flex: 1; border: 1px solid #e8e8e8; border-left: 0; border-radius: 0 3px 3px 0; background: #fafafa; display: flex; align-items: center; justify-content: space-around; }
.btn { height: 30px; margin-top: -1px; border: 1px solid #d9d9d9; border-radius: 3px; display: flex; align-items: center; justify-content: center; }
.cmd { width: 37px; }
.mode { width: 117px; margin: -1px 15px 0 8px; gap: 4px; font: 12.400px "Open Sans", sans-serif; color: #555; white-space: nowrap; }
.meta { height: 28px; flex: none; background: #ececec; border-bottom: 1px solid #e0e0e0; display: flex; align-items: center; padding-left: 7.500px; font-size: 13.100px; color: #999; }
.meta span { padding-right: 7px; margin-right: 8px; border-right: 1px solid #ddd; line-height: 15px; white-space: nowrap; }
.meta span:last-child { border: 0; }
.meta b { color: #444; font-size: 13.100px; }
.meta em { color: #aaa; }
.overview { height: 79px; flex: none; background: #f8f8f8; padding: 0 8px; }
.ticks { height: 15px; display: grid; grid-template-columns: 470.500px 471px 471px 1fr auto; font-size: 10.500px; line-height: 15px; color: #666; }
.graph { position: relative; width: 1884px; height: 56px; background: #fff; border: 1px solid #999; }
.graph i { position: absolute; }
.q { top: 0; bottom: 0; width: 1px; background: #aaa; }
.q1 { left: 470px; } .q2 { left: 941px; } .q3 { left: 1411px; }
.grip { top: 0; width: 3px; height: 19px; background: #555; z-index: 2; }
.left { left: -1px; } .right { right: -1px; }
.thead { height: 36px; flex: none; border-top: 1px solid #ccc; border-bottom: 1px solid #ccc; background: #ebebeb; display: flex; }
.so { position: relative; width: 475px; display: flex; align-items: center; padding: 0 21px 0 7.500px; gap: 9px; color: #888; }
h2 { font-size: 15.300px; color: #222; margin-right: auto; }
.resizer { position: absolute; left: 465px; top: 24px; width: 5px; height: 9px; border: solid #bbb; border-width: 0 1px; }
.cols { flex: 1; display: grid; grid-template-columns: repeat(4, 1fr); font-size: 13px; line-height: 35px; color: #555; }
.cols span { border-left: 1px solid #ccc; padding: 0 4px 0 3px; display: flex; justify-content: space-between; }
.cols b { font-weight: 400; }
.rows { flex: 1; overflow: hidden; padding-top: .6px; background: linear-gradient(#ccc, #ccc) 475px 0 / 1px 100%, linear-gradient(#d8d8d8, #d8d8d8) 831px 0 / 1px 100%, linear-gradient(#d8d8d8, #d8d8d8) 1187px 0 / 1px 100%, linear-gradient(#d8d8d8, #d8d8d8) 1543px 0 / 1px 100%, linear-gradient(90deg, #f8f8f8 475px, #fff 475px); background-repeat: no-repeat; }
.row { height: 26.250px; display: flex; }
.name { width: 475px; padding-left: 2px; display: flex; align-items: center; white-space: nowrap; }
.guide { width: 21.650px; height: 100%; border-left: 1px solid #ccc; padding: 7px 0 0 2.500px; color: #444; }
.mark { width: 3px; height: 19px; margin: 0 8.500px 0 -2px; }
.svc { font-size: 13.780px; color: #000; margin-top: -2px; }
.row:nth-child(5) .svc { color: #11565b; }
.op { font-size: 10.500px; color: #808080; margin-left: 8px; }
.track { position: relative; flex: 1; display: flex; align-items: center; overflow: hidden; white-space: nowrap; }
.bar { height: 9.500px; border-radius: 3px; flex: none; }
.dur { margin-left: 5.500px; font-size: 11px; color: #a4a4a4; }
.tick { position: absolute; top: 5px; width: 1px; height: 16px; background: rgba(0,0,0,.55); }
.scroll { width: 20px; background: #f0f0f0; padding: 10px 0 9px 2px; display: flex; flex-direction: column; }
.scroll i { flex: none; }
.up { border: 5px solid transparent; border-top: 0; border-bottom-color: #999; width: 0; margin: -1px 0 7px 3.500px; }
.thumb { width: 17px; height: 281px; background: #c1c1c1; margin-top: 0; }
.dn { border: 5px solid transparent; border-bottom: 0; border-top-color: #505050; width: 0; margin: auto 0 0 3.500px; }

/* taskbar */
.taskbar { height: 59px; flex: none; display: flex; align-items: center; border-top: 1px solid #b9aea4; background: linear-gradient(90deg, #d0deeb 0, #d8e2dc 80px, #e2e5bf 160px, #e9e0b9 225px, #eddad3 270px, #eddad3 380px, #f0e0cd 500px, #eddad3 660px, #eddad3 980px, #ece2b2 1070px, #ebe2b4 1110px, #dedad2 1190px, #e8e6ae 1260px, #e6e6ab 1340px, #eddcc9 1400px, #ecdad5 1500px, #f5e4d3 1640px, #efe2bd 1750px, #f0e0cc 1860px); }
.weather { position: relative; width: 446px; display: flex; align-items: center; padding-left: 23px; }
.weather p { margin-left: 7px; font-size: 14.500px; line-height: 20px; }
.count { position: absolute; left: 39px; top: -1px; width: 20px; height: 20px; border-radius: 50%; background: #c42b1c; color: #fff; font-size: 13px; line-height: 19px; text-align: center; }
.search { width: 273px; height: 39px; margin-left: 18px; border-radius: 20px; background: #faf4f0; box-shadow: 0 1px 1px #b9aca4; display: flex; align-items: center; padding: 0 2px 0 14px; }
.search span { margin: 0 auto 0 11px; font-size: 18px; color: #555; }
.apps { display: flex; margin-left: 4px; }
.app { position: relative; width: 55.030px; height: 48px; display: grid; place-items: center; }
.app > svg { width: 30px; height: 30px; }
.app.hover::before, .chrome::before { content: ""; position: absolute; inset: 0 4px; border-radius: 5px; background: rgba(255,255,255,.25); box-shadow: 0 0 1px #a99; }
.chrome::before { background: #f3f0e0; }
.app > svg { position: relative; }
.run::after { content: ""; position: absolute; bottom: 0; width: 8px; height: 4px; border-radius: 2px; background: #857d76; }
.chrome::after { width: 20px; background: #0a78d4; }
.rb { position: absolute; left: 29px; top: 3px; width: 20px; height: 20px; border-radius: 50%; background: #8d6e63; color: #eee; font: 12px/20px Roboto, sans-serif; text-align: center; }
.go { font: 700 9.500px "Open Sans", sans-serif; fill: #fff; text-anchor: middle; }
.ev { font: italic 11px "Liberation Serif", serif; fill: #2a86c8; text-anchor: middle; }
.tray { margin-left: auto; padding-right: 25px; display: flex; align-items: center; }
.mic { margin-left: 25px; }
.ime { margin-left: 22px; font-size: 18px; }
.wifi { margin-left: 22px; }
.vol { margin-left: 10px; }
.bat { margin-left: 10px; }
.clock { width: 86px; margin: 0 10px 0 4px; font-size: 14.500px; line-height: 20px; text-align: right; }
```
FILE: script.js
```js
const TEAL = '#17b8be', SAND = '#f8dca1', BROWN = '#b7885e', PEACH = '#ffcb99';
const ORIGIN = 475;
const UI = 'userclient.User/UserInfo', FI = 'ucenter.fileStorage/GetFileInfo';

// depth, expandable, colour, service, operation, bar start, bar end, label, log ticks
const spans = [
  [0, 1, TEAL, 'contract.api', '/api/contract/ContractList', 475, 1899, '', []],
  [1, 1, TEAL, 'contract.api', 'contractclient.Contract/List', 479, 1885, '37.', [478, 1885]],
  [2, 1, SAND, 'contract.rpc', 'contractclient.Contract/List', 500, 1866, '35.98', [500, 1868]],
  [3, 0, SAND, 'contract.rpc', 'sql', 505, 536, '827μs', []],
  [3, 0, SAND, 'contract.rpc', 'redis', 555, 560, '156μs', []],
  [3, 1, SAND, 'contract.rpc', UI, 564, 626.5, '1.61ms', [566, 626]],
  [4, 1, BROWN, 'user.rpc', UI, 592, 614.5, '585μs', [592, 614]],
  [5, 0, BROWN, 'user.rpc', 'redis', 597, 604, '179μs', []],
  [5, 0, BROWN, 'user.rpc', 'redis', 606, 610, '120μs', []],
  [3, 1, SAND, 'contract.rpc', UI, 627, 677.5, '1.32ms', [629, 677]],
  [4, 1, BROWN, 'user.rpc', UI, 646, 668.5, '597μs', [646, 668]],
  [5, 0, BROWN, 'user.rpc', 'redis', 649, 653, '102μs', []],
  [5, 0, BROWN, 'user.rpc', 'redis', 656, 663, '203μs', []],
  [3, 1, SAND, 'contract.rpc', FI, 677, 717.5, '1.05ms', [677, 717]],
  [4, 1, PEACH, 'file.rpc', FI, 691, 707, '399μs', [691, 705]],
  [5, 0, PEACH, 'file.rpc', 'redis', 694, 701, '183μs', []],
  [3, 0, SAND, 'contract.rpc', 'redis', 721, 727, '166μs', []],
  [3, 1, SAND, 'contract.rpc', UI, 730, 772.5, '1.14ms', [731, 774]],
  [4, 1, BROWN, 'user.rpc', UI, 740, 764, '625μs', [740, 762]],
  [5, 0, BROWN, 'user.rpc', 'redis', 743, 752, '245μs', []],
  [5, 0, BROWN, 'user.rpc', 'redis', 754, 760, '140μs', []],
  [3, 1, SAND, 'contract.rpc', UI, 774, 824.5, '1.32ms', [774, 825]],
  [4, 1, BROWN, 'user.rpc', UI, 782, 809.5, '723μs', [782, 811]],
  [5, 0, BROWN, 'user.rpc', 'redis', 784, 794, '278μs', []],
  [5, 0, BROWN, '', '', 800, 800, '', []]
];
const chevron = '<svg width="12" height="12"><use href="#down"/></svg>';
document.getElementById('rows').innerHTML = spans.map(([d, open, c, svc, op, a, b, label, ticks]) =>
  `<div class="row"><div class="name">${
    Array.from({ length: d + 1 }, (_, k) => `<i class="guide">${k === d && open ? chevron : ''}</i>`).join('')
  }<i class="mark" style="background:${c}"></i><span class="svc">${svc}</span><span class="op">${op}</span></div>` +
  `<div class="track"><i class="bar" style="margin-left:${a - ORIGIN}px;width:${b - a}px;background:${c}"></i>` +
  `<span class="dur">${label}</span>${ticks.map(t => `<i class="tick" style="left:${t - ORIGIN}px"></i>`).join('')}</div></div>`
).join('');

// overview segments: start, end, y, colour
const mini = [
  [12, 42, 285, TEAL], [42, 1849, 285, '#a9d3a4'], [46, 1849, 286, '#f7e9c6'], [1849, 1871, 285, TEAL],
  [46, 88, 286, SAND], [113, 122, 287, SAND], [127, 208, 287, SAND], [163, 193, 288, BROWN], [169, 178, 289, BROWN], [181, 187, 289, BROWN],
  [209, 276, 290, SAND], [235, 265, 291, BROWN], [246, 256, 292, BROWN],
  [277, 329, 292, SAND], [295, 315, 293, PEACH], [333, 342, 294, SAND],
  [346, 402, 295, SAND], [359, 391, 296, BROWN], [364, 373, 297, BROWN], [377, 384, 297, BROWN],
  [404, 470, 298, SAND], [415, 451, 298, BROWN], [423, 429, 299, BROWN], [435, 445, 300, BROWN],
  [472, 531, 300, SAND], [493, 519, 301, PEACH], [499, 511, 302, PEACH], [535, 541, 302, SAND],
  [544, 619, 302, SAND], [565, 605, 303, BROWN], [570, 581, 304, BROWN], [585, 597, 305, BROWN],
  [620, 693, 305, SAND], [637, 678, 306, BROWN], [643, 653, 307, BROWN], [659, 669, 307, BROWN],
  [695, 771, 308, SAND], [725, 754, 308, PEACH], [732, 745, 309, PEACH], [778, 791, 310, SAND],
  [797, 892, 310, SAND], [829, 874, 311, BROWN], [837, 848, 312, BROWN], [854, 864, 312, BROWN],
  [895, 966, 313, SAND], [913, 954, 314, BROWN], [918, 930, 315, BROWN], [934, 946, 315, BROWN],
  [967, 1046, 316, SAND], [990, 1022, 316, PEACH], [1052, 1058, 317, SAND],
  [1052, 1145, 318, SAND], [1070, 1136, 319, BROWN], [1082, 1095, 320, BROWN], [1110, 1122, 320, BROWN],
  [1148, 1207, 321, SAND], [1163, 1192, 321, BROWN], [1172, 1184, 322, BROWN],
  [1212, 1240, 323, SAND], [1240, 1329, 323, SAND], [1285, 1311, 324, PEACH], [1292, 1305, 325, PEACH], [1336, 1348, 325, SAND],
  [1353, 1461, 326, SAND], [1376, 1436, 327, BROWN], [1383, 1396, 328, BROWN], [1401, 1412, 328, BROWN],
  [1464, 1534, 328, SAND], [1486, 1520, 329, BROWN], [1490, 1502, 330, BROWN], [1505, 1513, 330, BROWN],
  [1536, 1592, 331, SAND], [1557, 1580, 332, PEACH], [1601, 1611, 333, SAND],
  [1615, 1690, 333, SAND], [1635, 1676, 334, BROWN], [1641, 1653, 335, BROWN], [1657, 1667, 335, BROWN],
  [1694, 1771, 336, SAND], [1711, 1754, 337, BROWN], [1718, 1731, 338, BROWN], [1735, 1745, 338, BROWN],
  [1772, 1839, 338, '#efd09a']
];
document.getElementById('graph').insertAdjacentHTML('afterbegin', mini.map(([a, b, y, c]) =>
  `<i style="left:${a - 9}px;top:${y - 285}px;width:${b - a}px;height:1px;background:${c}"></i>`).join(''));
```
